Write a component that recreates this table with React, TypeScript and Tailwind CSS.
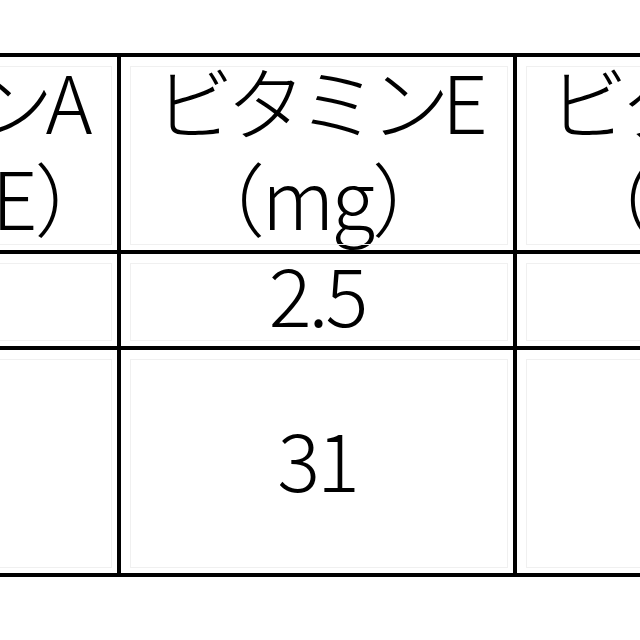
const font = "font-['Noto_Sans_CJK_JP','Noto_Sans',sans-serif]";

function Mu({ w }: { w: string }) {
  return <span className={`inline-block text-center ${w}`}>μ</span>;
}

type Row = { rows: string; pad: string; cells: React.ReactNode[][] };

const rows: Row[] = [
  {
    rows: "grid-rows-[197px]",
    pad: "pb-[14px]",
    cells: [
      ["ビタミンA", <>（<Mu w="w-[54px]" />gRAE）</>],
      ["ビタミンE", "（mg）"],
      ["ビタミンK", <>（<Mu w="w-[84px]" />g）</>],
    ],
  },
  { rows: "grid-rows-[96px]", pad: "pb-[16px]", cells: [[], ["2.5"], []] },
  { rows: "grid-rows-[227px]", pad: "pb-[10px]", cells: [[], ["31"], []] },
];

export default function App() {
  return (
    <div className={`h-[640px] w-[640px] overflow-hidden bg-white text-black ${font}`}>
      <div className="ml-[-279px] mt-[53px] w-[1192px] border-l-4 border-t-4 border-black">
        {rows.map((row, ri) => (
          <div key={ri} className={`grid grid-cols-[396px_396px_396px] ${row.rows}`}>
            {row.cells.map((lines, ci) => (
              <div
                key={ci}
                className={`flex min-h-0 flex-col items-center justify-center border-b-4 border-r-4 border-black outline outline-1 outline-offset-[-10px] outline-[#f0f0f0] text-[80px] font-light leading-[96px] ${row.pad}`}
              >
                {lines.map((t, i) => (
                  <div
                    key={i}
                    className={
                      i === 0 && lines.length > 1
                        ? "whitespace-nowrap tracking-[-8px]"
                        : "whitespace-nowrap tracking-[-3px]"
                    }
                  >
                    {t}
                  </div>
                ))}
              </div>
            ))}
          </div>
        ))}
      </div>
    </div>
  );
}
